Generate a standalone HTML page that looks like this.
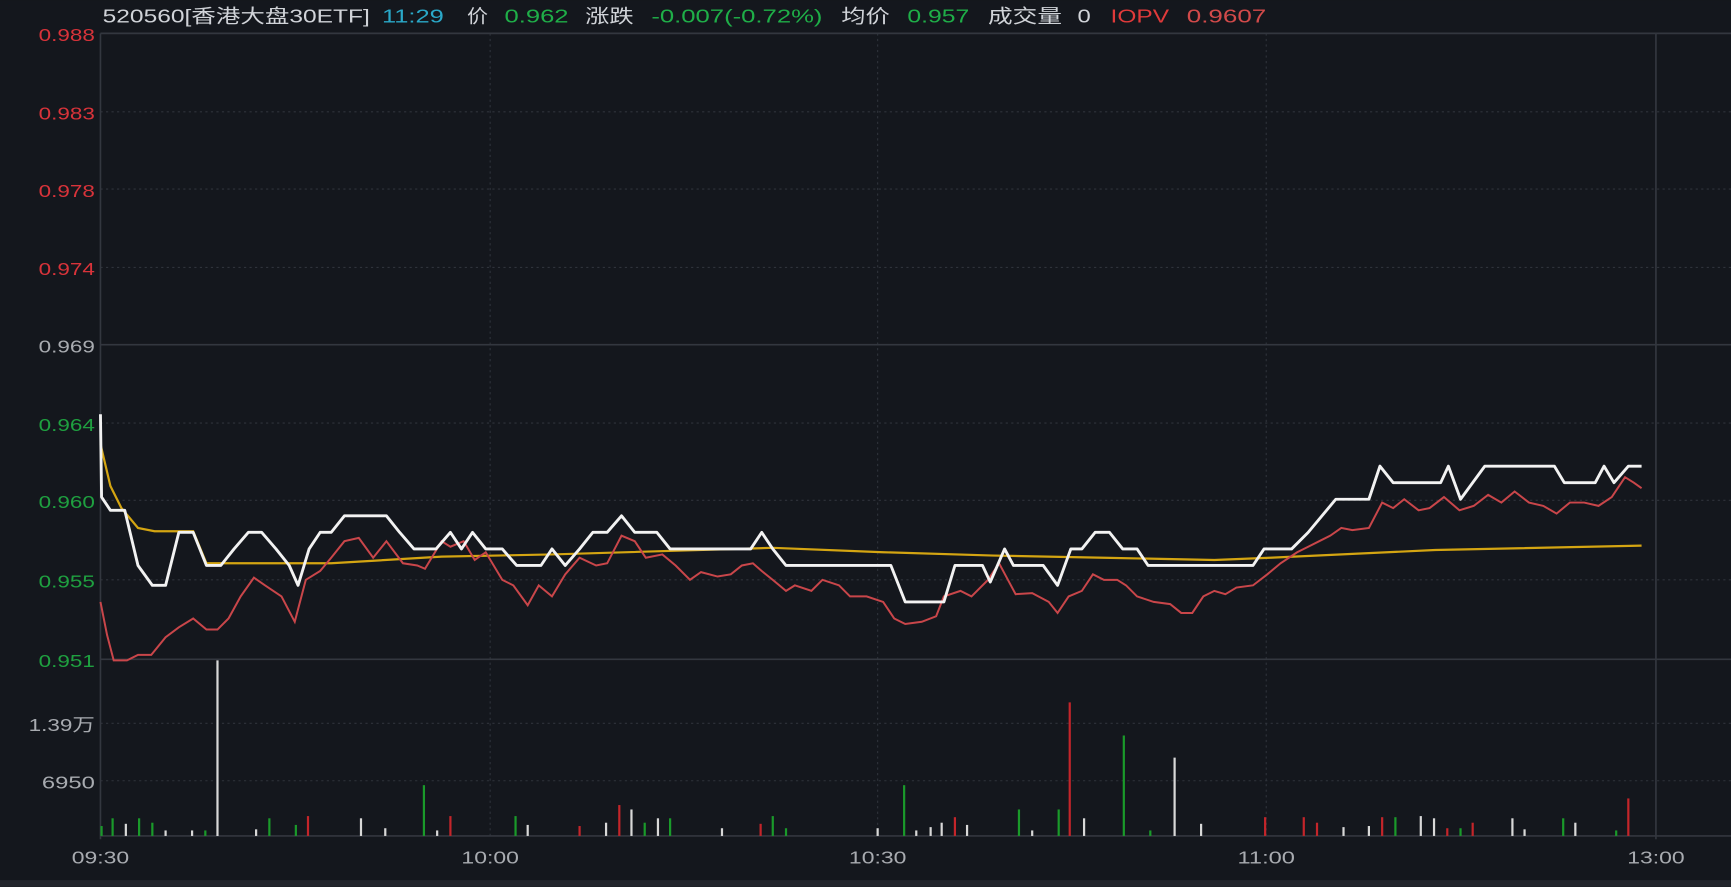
<!DOCTYPE html>
<html><head><meta charset="utf-8"><style>
html,body{margin:0;padding:0;background:#14171d;overflow:hidden}
svg{display:block}
text{font-family:"Liberation Sans","Noto Sans CJK SC",sans-serif}
</style></head><body>
<svg width="1731" height="887" viewBox="0 0 1568 803" xmlns="http://www.w3.org/2000/svg">
<rect width="1568" height="803" fill="#14171d"/>
<rect y="797" width="1568" height="6" fill="#22252b"/>
<g stroke="#2f333b" stroke-width="1" stroke-dasharray="2,3">
<line x1="91" y1="101" x2="1568" y2="101"/><line x1="91" y1="171" x2="1568" y2="171"/>
<line x1="91" y1="242" x2="1568" y2="242"/><line x1="91" y1="383" x2="1568" y2="383"/>
<line x1="91" y1="453" x2="1568" y2="453"/><line x1="91" y1="525" x2="1568" y2="525"/>
<line x1="91" y1="655" x2="1568" y2="655"/><line x1="91" y1="707" x2="1568" y2="707"/>
<line x1="444" y1="30" x2="444" y2="760"/><line x1="795" y1="30" x2="795" y2="760"/><line x1="1147" y1="30" x2="1147" y2="760"/>
</g>
<g stroke="#33373f" stroke-width="1.5">
<line x1="91" y1="30" x2="1568" y2="30"/>
<line x1="91" y1="312" x2="1568" y2="312"/>
<line x1="91" y1="597" x2="1568" y2="597"/>
<line x1="91" y1="757" x2="1568" y2="757"/>
<line x1="91" y1="30" x2="91" y2="760"/>
<line x1="1500" y1="30" x2="1500" y2="760"/>
</g>
<g font-size="17">
<text x="93" y="20" fill="#d0d3d8" textLength="242" lengthAdjust="spacingAndGlyphs">520560[香港大盘30ETF]</text>
<text x="346" y="20" fill="#2aa8c8" textLength="56" lengthAdjust="spacingAndGlyphs">11:29</text>
<text x="423" y="20" fill="#d0d3d8" textLength="19" lengthAdjust="spacingAndGlyphs">价</text>
<text x="457" y="20" fill="#1fae48" textLength="58" lengthAdjust="spacingAndGlyphs">0.962</text>
<text x="530" y="20" fill="#d0d3d8" textLength="44" lengthAdjust="spacingAndGlyphs">涨跌</text>
<text x="590" y="20" fill="#1fae48" textLength="155" lengthAdjust="spacingAndGlyphs">-0.007(-0.72%)</text>
<text x="762" y="20" fill="#d0d3d8" textLength="44" lengthAdjust="spacingAndGlyphs">均价</text>
<text x="822" y="20" fill="#1fae48" textLength="56" lengthAdjust="spacingAndGlyphs">0.957</text>
<text x="895" y="20" fill="#d0d3d8" textLength="67" lengthAdjust="spacingAndGlyphs">成交量</text>
<text x="976" y="20" fill="#d0d3d8" textLength="12" lengthAdjust="spacingAndGlyphs">0</text>
<text x="1006" y="20" fill="#e03a3a" textLength="53" lengthAdjust="spacingAndGlyphs">IOPV</text>
<text x="1075" y="20" fill="#d24a4a" textLength="72" lengthAdjust="spacingAndGlyphs">0.9607</text>
</g>
<g font-size="16" text-anchor="end">
<text x="86" y="37" fill="#d8333a" textLength="51" lengthAdjust="spacingAndGlyphs">0.988</text><text x="86" y="108" fill="#d8333a" textLength="51" lengthAdjust="spacingAndGlyphs">0.983</text>
<text x="86" y="178" fill="#d8333a" textLength="51" lengthAdjust="spacingAndGlyphs">0.978</text><text x="86" y="249" fill="#d8333a" textLength="51" lengthAdjust="spacingAndGlyphs">0.974</text>
<text x="86" y="319" fill="#a8abb0" textLength="51" lengthAdjust="spacingAndGlyphs">0.969</text>
<text x="86" y="390" fill="#1fa040" textLength="51" lengthAdjust="spacingAndGlyphs">0.964</text><text x="86" y="460" fill="#1fa040" textLength="51" lengthAdjust="spacingAndGlyphs">0.960</text>
<text x="86" y="532" fill="#1fa040" textLength="51" lengthAdjust="spacingAndGlyphs">0.955</text><text x="86" y="604" fill="#1fa040" textLength="51" lengthAdjust="spacingAndGlyphs">0.951</text>
<text x="86" y="662" fill="#a8abb0" textLength="60" lengthAdjust="spacingAndGlyphs">1.39万</text><text x="86" y="714" fill="#a8abb0" textLength="48" lengthAdjust="spacingAndGlyphs">6950</text>
</g>
<g font-size="16" fill="#a8abb0" text-anchor="middle">
<text x="91" y="782" textLength="52" lengthAdjust="spacingAndGlyphs">09:30</text><text x="444" y="782" textLength="52" lengthAdjust="spacingAndGlyphs">10:00</text><text x="795" y="782" textLength="52" lengthAdjust="spacingAndGlyphs">10:30</text><text x="1147" y="782" textLength="52" lengthAdjust="spacingAndGlyphs">11:00</text><text x="1500" y="782" textLength="52" lengthAdjust="spacingAndGlyphs">13:00</text>
</g>
<g stroke-width="2">
<g stroke="#1a9a2a">
<line x1="92" y1="757" x2="92" y2="748"/><line x1="102" y1="757" x2="102" y2="741"/><line x1="126" y1="757" x2="126" y2="741"/><line x1="138" y1="757" x2="138" y2="745"/><line x1="186" y1="757" x2="186" y2="752"/><line x1="244" y1="757" x2="244" y2="741"/><line x1="268" y1="757" x2="268" y2="747"/><line x1="384" y1="757" x2="384" y2="711"/><line x1="467" y1="757" x2="467" y2="739"/><line x1="584" y1="757" x2="584" y2="745"/><line x1="607" y1="757" x2="607" y2="741"/><line x1="700" y1="757" x2="700" y2="739"/><line x1="712" y1="757" x2="712" y2="750"/><line x1="819" y1="757" x2="819" y2="711"/><line x1="923" y1="757" x2="923" y2="733"/><line x1="959" y1="757" x2="959" y2="733"/><line x1="1018" y1="757" x2="1018" y2="666"/><line x1="1042" y1="757" x2="1042" y2="752"/><line x1="1264" y1="757" x2="1264" y2="740"/><line x1="1323" y1="757" x2="1323" y2="750"/><line x1="1416" y1="757" x2="1416" y2="741"/><line x1="1464" y1="757" x2="1464" y2="752"/>
</g>
<g stroke="#c4252a">
<line x1="279" y1="757" x2="279" y2="739"/><line x1="408" y1="757" x2="408" y2="739"/><line x1="525" y1="757" x2="525" y2="748"/><line x1="561" y1="757" x2="561" y2="729"/><line x1="689" y1="757" x2="689" y2="746"/><line x1="865" y1="757" x2="865" y2="740"/><line x1="969" y1="757" x2="969" y2="636"/><line x1="1146" y1="757" x2="1146" y2="740"/><line x1="1181" y1="757" x2="1181" y2="740"/><line x1="1193" y1="757" x2="1193" y2="745"/><line x1="1252" y1="757" x2="1252" y2="740"/><line x1="1311" y1="757" x2="1311" y2="750"/><line x1="1334" y1="757" x2="1334" y2="745"/><line x1="1475" y1="757" x2="1475" y2="723"/>
</g>
<g stroke="#d8d8d8">
<line x1="114" y1="757" x2="114" y2="746"/><line x1="150" y1="757" x2="150" y2="752"/><line x1="174" y1="757" x2="174" y2="752"/><line x1="197" y1="757" x2="197" y2="598"/><line x1="232" y1="757" x2="232" y2="751"/><line x1="327" y1="757" x2="327" y2="741"/><line x1="349" y1="757" x2="349" y2="750"/><line x1="396" y1="757" x2="396" y2="752"/><line x1="478" y1="757" x2="478" y2="747"/><line x1="549" y1="757" x2="549" y2="745"/><line x1="572" y1="757" x2="572" y2="733"/><line x1="596" y1="757" x2="596" y2="741"/><line x1="654" y1="757" x2="654" y2="750"/><line x1="795" y1="757" x2="795" y2="750"/><line x1="830" y1="757" x2="830" y2="752"/><line x1="843" y1="757" x2="843" y2="749"/><line x1="853" y1="757" x2="853" y2="745"/><line x1="876" y1="757" x2="876" y2="747"/><line x1="935" y1="757" x2="935" y2="752"/><line x1="982" y1="757" x2="982" y2="741"/><line x1="1064" y1="757" x2="1064" y2="686"/><line x1="1088" y1="757" x2="1088" y2="746"/><line x1="1217" y1="757" x2="1217" y2="749"/><line x1="1240" y1="757" x2="1240" y2="748"/><line x1="1287" y1="757" x2="1287" y2="739"/><line x1="1299" y1="757" x2="1299" y2="741"/><line x1="1370" y1="757" x2="1370" y2="741"/><line x1="1381" y1="757" x2="1381" y2="751"/><line x1="1427" y1="757" x2="1427" y2="745"/>
</g>
</g>
<polyline fill="none" stroke="#d4a512" stroke-width="2" points="91,402 100,440 110,460 125,478 140,481 175,481 187,510 300,510 400,504 500,502 700,496 800,500 900,503 1000,505 1100,507 1150,505 1300,498 1487,494"/>
<polyline fill="none" stroke="#c9464a" stroke-width="1.8" points="91,545 97,575 103,598 115,598 125,593 137,593 150,577 162,568 175,560 187,570 197,570 207,560 218,540 230,523 240,530 255,540 267,563 277,525 290,517 300,505 312,490 325,487 338,505 350,490 365,510 378,512 385,515 400,490 408,495 420,490 430,507 440,500 455,525 465,530 478,548 488,530 500,540 512,520 525,505 540,512 550,510 563,485 575,490 585,505 600,502 612,512 625,525 635,518 650,522 662,520 672,512 682,510 690,517 700,525 712,535 720,530 735,535 745,525 760,530 770,540 785,540 800,545 810,560 820,565 835,563 848,558 855,540 870,535 880,540 895,525 905,510 913,525 920,538 935,537 950,545 958,555 968,540 980,535 990,520 1000,525 1012,525 1020,530 1030,540 1045,545 1060,547 1070,555 1080,555 1090,540 1100,535 1110,538 1120,532 1135,530 1148,520 1160,510 1175,500 1185,495 1195,490 1205,485 1215,478 1225,480 1240,478 1252,455 1262,460 1272,452 1285,462 1295,460 1308,450 1322,462 1335,458 1348,448 1360,455 1372,445 1385,455 1398,458 1410,465 1422,455 1435,455 1448,458 1460,450 1472,432 1480,437 1487,442"/>
<polyline fill="none" stroke="#f2f2f2" stroke-width="2.6" stroke-linejoin="round" points="91,375 92,450 100,462 113,462 125,512 138,530 150,530 162,482 175,482 187,512 200,512 212,497 225,482 237,482 250,497 262,512 270,530 280,497 290,482 300,482 312,467 325,467 350,467 362,482 375,497 395,497 408,482 418,497 428,482 440,497 455,497 468,512 490,512 500,497 512,512 525,497 537,482 550,482 563,467 575,482 595,482 607,497 680,497 690,482 700,497 712,512 807,512 820,545 855,545 865,512 890,512 897,527 910,497 918,512 945,512 958,530 970,497 980,497 992,482 1005,482 1017,497 1030,497 1040,512 1135,512 1145,497 1170,497 1185,482 1210,452 1240,452 1250,422 1262,437 1305,437 1312,422 1323,452 1345,422 1408,422 1417,437 1445,437 1453,422 1462,437 1475,422 1487,422"/>
</svg>
</body></html>
